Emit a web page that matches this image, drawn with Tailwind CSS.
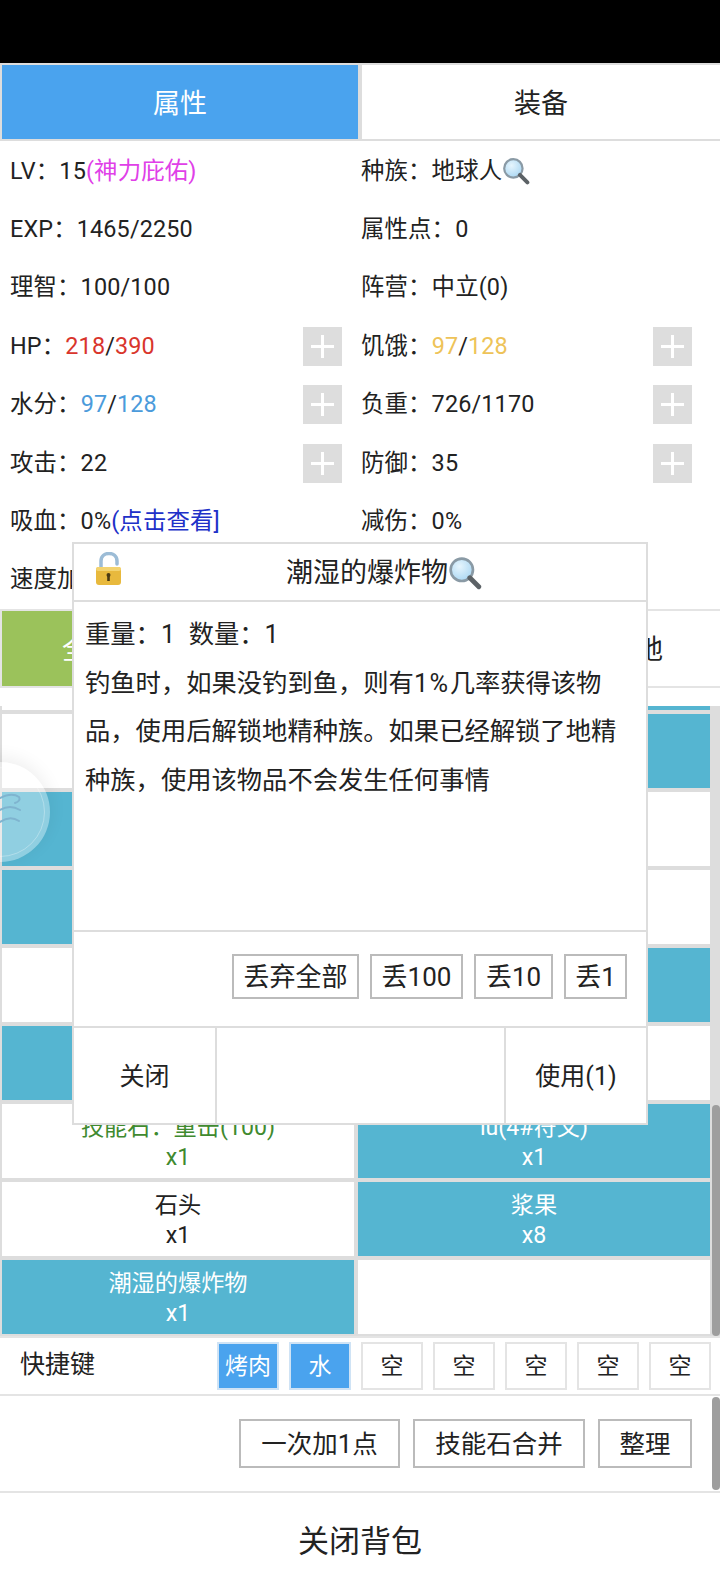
<!DOCTYPE html>
<html lang="en">

<head>
    <meta charset="utf-8">
    <meta name="viewport" content="width=device-width, initial-scale=1">
    <title>背包</title>
    <script src="https://cdn.jsdelivr.net/npm/@tailwindcss/browser@4"></script>
</head>

<body class="relative w-[720px] h-[1588px] overflow-hidden bg-white text-[#222] font-['Roboto','Noto_Sans_CJK_SC',sans-serif]">
    <!-- shared gradient for the magnifier icons -->
    <svg class="absolute w-0 h-0"><defs><radialGradient id="lens" cx="0.4" cy="0.35" r="0.7"><stop offset="0" stop-color="#e6f5fd"/><stop offset="1" stop-color="#a9d6f2"/></radialGradient></defs></svg>

    <!-- status bar -->
    <div class="h-[63px] bg-black"></div>

    <!-- tabs -->
    <div class="grid grid-cols-2 h-[78px] text-[27px]">
        <div class="flex items-center justify-center pt-[4px] border-2 border-[#ddd] bg-[#4aa3ee] text-white">属性</div>
        <div class="flex items-center justify-center pt-[4px] border-2 border-r-0 border-[#ddd]">装备</div>
    </div>

    <!-- stats -->
    <div class="grid grid-cols-2 auto-rows-[58.4px] pt-[1px] text-[23.4px] tracking-[0.15px] h-[468px]">
        <div class="flex items-center pl-[10px]">LV：15<span class="text-[#e040e8]">(神力庇佑)</span></div>
        <div class="flex items-center pl-[1px]">种族：地球人
            <svg class="w-[28px] h-[28px]" viewBox="0 0 32 32"><circle cx="13" cy="13" r="10.5" fill="url(#lens)" stroke="#8a9aa5" stroke-width="2.5"/><path d="M20.5 20.5 L29 29" stroke="#5c6266" stroke-width="4.5" stroke-linecap="round"/></svg>
        </div>
        <div class="flex items-center pl-[10px]">EXP：1465/2250</div>
        <div class="flex items-center pl-[1px]">属性点：0</div>
        <div class="flex items-center pl-[10px]">理智：100/100</div>
        <div class="flex items-center pl-[1px]">阵营：中立(0)</div>
        <div class="flex items-center justify-between pl-[10px] pr-[18px]">
            <span>HP：<span class="text-[#d9352c]">218</span>/<span class="text-[#d9352c]">390</span></span>
            <span class="flex items-center justify-center w-[39px] h-[39px] bg-[#ddd]"><svg class="w-[23px] h-[23px]" viewBox="0 0 23 23"><path d="M11.5 0 V23 M0 11.5 H23" stroke="#fff" stroke-width="3"/></svg></span>
        </div>
        <div class="flex items-center justify-between pl-[1px] pr-[28px]">
            <span>饥饿：<span class="text-[#eec358]">97</span>/<span class="text-[#eec358]">128</span></span>
            <span class="flex items-center justify-center w-[39px] h-[39px] bg-[#ddd]"><svg class="w-[23px] h-[23px]" viewBox="0 0 23 23"><path d="M11.5 0 V23 M0 11.5 H23" stroke="#fff" stroke-width="3"/></svg></span>
        </div>
        <div class="flex items-center justify-between pl-[10px] pr-[18px]">
            <span>水分：<span class="text-[#4b9bdb]">97</span>/<span class="text-[#4b9bdb]">128</span></span>
            <span class="flex items-center justify-center w-[39px] h-[39px] bg-[#ddd]"><svg class="w-[23px] h-[23px]" viewBox="0 0 23 23"><path d="M11.5 0 V23 M0 11.5 H23" stroke="#fff" stroke-width="3"/></svg></span>
        </div>
        <div class="flex items-center justify-between pl-[1px] pr-[28px]">
            <span>负重：726/1170</span>
            <span class="flex items-center justify-center w-[39px] h-[39px] bg-[#ddd]"><svg class="w-[23px] h-[23px]" viewBox="0 0 23 23"><path d="M11.5 0 V23 M0 11.5 H23" stroke="#fff" stroke-width="3"/></svg></span>
        </div>
        <div class="flex items-center justify-between pl-[10px] pr-[18px]">
            <span>攻击：22</span>
            <span class="flex items-center justify-center w-[39px] h-[39px] bg-[#ddd]"><svg class="w-[23px] h-[23px]" viewBox="0 0 23 23"><path d="M11.5 0 V23 M0 11.5 H23" stroke="#fff" stroke-width="3"/></svg></span>
        </div>
        <div class="flex items-center justify-between pl-[1px] pr-[28px]">
            <span>防御：35</span>
            <span class="flex items-center justify-center w-[39px] h-[39px] bg-[#ddd]"><svg class="w-[23px] h-[23px]" viewBox="0 0 23 23"><path d="M11.5 0 V23 M0 11.5 H23" stroke="#fff" stroke-width="3"/></svg></span>
        </div>
        <div class="flex items-center pl-[10px]">吸血：0%<span class="text-[#2030c8]">(点击查看]</span></div>
        <div class="flex items-center pl-[1px]">减伤：0%</div>
        <div class="flex items-center pl-[10px]">速度加成：0%</div>
        <div></div>
    </div>

    <!-- category tabs, mostly behind the dialog -->
    <div class="grid grid-cols-2 h-[79px] text-[27px]">
        <div class="flex items-center pl-[60px] pt-[3px] border-2 border-[#e4e4e4] bg-[#9bc25b] text-white">全</div>
        <div class="flex items-center justify-end pr-[57px] pt-[3px] border-y-2 border-[#e4e4e4]">地</div>
    </div>
    <div class="h-[18px]"></div>

    <!-- inventory list -->
    <div class="flex h-[630px]">
        <div class="w-[712px] overflow-hidden">
            <div class="grid grid-cols-2 auto-rows-[78px] mt-[-72px] text-[23.2px] leading-[30px] text-center">
                <div class="border-2 border-[#ddd]"></div>
                <div class="border-2 border-[#ddd] bg-[#55b5d1]"></div>
                <div class="border-2 border-[#ddd]"></div>
                <div class="border-2 border-[#ddd] bg-[#55b5d1]"></div>
                <div class="border-2 border-[#ddd] bg-[#55b5d1]"></div>
                <div class="border-2 border-[#ddd]"></div>
                <div class="border-2 border-[#ddd] bg-[#55b5d1]"></div>
                <div class="border-2 border-[#ddd]"></div>
                <div class="border-2 border-[#ddd]"></div>
                <div class="border-2 border-[#ddd] bg-[#55b5d1]"></div>
                <div class="border-2 border-[#ddd] bg-[#55b5d1]"></div>
                <div class="border-2 border-[#ddd]"></div>
                <div class="flex flex-col justify-center pt-[2px] border-2 border-[#ddd] text-[#3f8a2f]"><div>技能石：重击(100)</div><div>x1</div></div>
                <div class="flex flex-col justify-center pt-[2px] border-2 border-[#ddd] bg-[#55b5d1] text-white"><div>lu(4#符文)</div><div>x1</div></div>
                <div class="flex flex-col justify-center pt-[2px] border-2 border-[#ddd]"><div>石头</div><div>x1</div></div>
                <div class="flex flex-col justify-center pt-[2px] border-2 border-[#ddd] bg-[#55b5d1] text-white"><div>浆果</div><div>x8</div></div>
                <div class="flex flex-col justify-center pt-[2px] border-2 border-[#ddd] bg-[#55b5d1] text-white"><div>潮湿的爆炸物</div><div>x1</div></div>
                <div class="border-2 border-[#ddd]"></div>
            </div>
        </div>
        <div class="flex flex-col justify-end w-[8px] bg-[#ddd]">
            <div class="h-[231px] rounded-[4px] bg-[#9e9e9e]"></div>
        </div>
    </div>

    <!-- quick keys -->
    <div class="flex items-center justify-between h-[60px] pl-[20px] pr-[9px] border-y-2 border-[#e4e4e4] text-[23px]">
        <span class="text-[25px] -mt-[3px]">快捷键</span>
        <div class="flex gap-[10px]">
            <div class="flex items-center justify-center w-[62px] h-[48px] pt-[2px] border-2 border-[#cfe3f5] bg-[#4aa3ee] text-white">烤肉</div>
            <div class="flex items-center justify-center w-[62px] h-[48px] pt-[2px] border-2 border-[#cfe3f5] bg-[#4aa3ee] text-white">水</div>
            <div class="flex items-center justify-center w-[62px] h-[48px] pt-[2px] border-2 border-[#e4e4e4]">空</div>
            <div class="flex items-center justify-center w-[62px] h-[48px] pt-[2px] border-2 border-[#e4e4e4]">空</div>
            <div class="flex items-center justify-center w-[62px] h-[48px] pt-[2px] border-2 border-[#e4e4e4]">空</div>
            <div class="flex items-center justify-center w-[62px] h-[48px] pt-[2px] border-2 border-[#e4e4e4]">空</div>
            <div class="flex items-center justify-center w-[62px] h-[48px] pt-[2px] border-2 border-[#e4e4e4]">空</div>
        </div>
    </div>

    <!-- toolbar -->
    <div class="relative flex items-center justify-end gap-[13px] h-[97px] pr-[28px] border-b-2 border-[#e4e4e4] text-[25.5px]">
        <div class="flex items-center justify-center w-[161px] h-[49px] pt-[2px] border-2 border-[#bbb]">一次加1点</div>
        <div class="flex items-center justify-center w-[172px] h-[49px] pt-[2px] border-2 border-[#bbb]">技能石合并</div>
        <div class="flex items-center justify-center w-[94px] h-[49px] pt-[2px] border-2 border-[#bbb]">整理</div>
        <div class="absolute right-0 top-[1px] w-[8px] h-[93px] rounded-[4px] bg-[#9e9e9e]"></div>
    </div>

    <!-- close -->
    <div class="flex items-center justify-center h-[95px] pt-[3px] text-[31px]">关闭背包</div>

    <!-- floating ball -->
    <div class="absolute left-[-50px] top-[762px] flex items-center justify-center w-[100px] h-[100px] rounded-full bg-white/35 shadow-[0_-4px_18px_rgba(0,0,0,0.07)]">
        <div class="w-[90px] h-[90px] rounded-full border border-white/30"></div>
        <svg class="absolute left-[50px] top-[30px] w-[22px] h-[40px]" viewBox="0 0 22 40" fill="none" stroke="#7fb4cf" stroke-width="2" stroke-linecap="round"><path d="M0 6 Q12 0 19 5 Q21 9 15 11"/><path d="M0 18 Q10 12 20 18"/><path d="M0 30 Q10 23 19 29"/></svg>
    </div>

    <!-- item dialog -->
    <div class="absolute left-[72px] top-[542px] flex flex-col w-[576px] h-[583px] border-2 border-[#ddd] bg-white">
        <div class="relative flex items-center justify-center h-[58px] pl-[48px] pt-[2px] border-b-2 border-[#ddd] text-[27px]">
            <svg class="absolute left-[20px] top-[8px] w-[30px] h-[34px]" viewBox="0 0 30 34">
                <path d="M7 17 V9 C7 -1 23 -1 23 9 V12" fill="none" stroke="#9cbcd6" stroke-width="3.5" stroke-linecap="round"/>
                <rect x="2" y="15" width="25" height="18" rx="3" fill="#e8b93d"/>
                <rect x="2" y="15" width="25" height="4" rx="2" fill="#f3d36f"/>
                <circle cx="14.5" cy="23" r="2" fill="#4a3a12"/>
                <rect x="13.2" y="23" width="2.6" height="6" fill="#4a3a12"/>
            </svg>
            潮湿的爆炸物
            <svg class="w-[34px] h-[34px]" viewBox="0 0 32 32"><circle cx="13" cy="13" r="10.5" fill="url(#lens)" stroke="#8a9aa5" stroke-width="2.5"/><path d="M20.5 20.5 L29 29" stroke="#5c6266" stroke-width="4.5" stroke-linecap="round"/></svg>
        </div>
        <div class="h-[328px] pt-[9px] pl-[11px] pr-[20px] text-[25.3px] leading-[48.5px]">
            <div>重量：<span class="tracking-[1px]">1</span>&nbsp;&nbsp;数量：<span class="tracking-[1px]">1</span></div>
            <div>钓鱼时，如果没钓到鱼，则有<span class="tracking-[1.5px]">1%</span>几率获得该物</div>
            <div>品，使用后解锁地精种族。如果已经解锁了地精</div>
            <div>种族，使用该物品不会发生任何事情</div>
        </div>
        <div class="flex items-center justify-end gap-[11px] h-[96px] pb-[5px] pr-[19px] border-t-2 border-[#ddd] text-[26px]">
            <div class="flex items-center justify-center w-[127px] h-[45px] pt-[2px] border-2 border-[#bbb]">丢弃全部</div>
            <div class="flex items-center justify-center w-[93px] h-[45px] pt-[2px] border-2 border-[#bbb]">丢100</div>
            <div class="flex items-center justify-center w-[79px] h-[45px] pt-[2px] border-2 border-[#bbb]">丢10</div>
            <div class="flex items-center justify-center w-[63px] h-[45px] pt-[2px] border-2 border-[#bbb]">丢1</div>
        </div>
        <div class="flex flex-1 border-t-2 border-[#ddd] text-[25px]">
            <div class="flex items-center justify-center w-[143px] pt-[3px] border-r-2 border-[#ddd]">关闭</div>
            <div class="flex-1"></div>
            <div class="flex items-center justify-center w-[142px] pt-[3px] border-l-2 border-[#ddd]">使用(1)</div>
        </div>
    </div>
</body>

</html>
